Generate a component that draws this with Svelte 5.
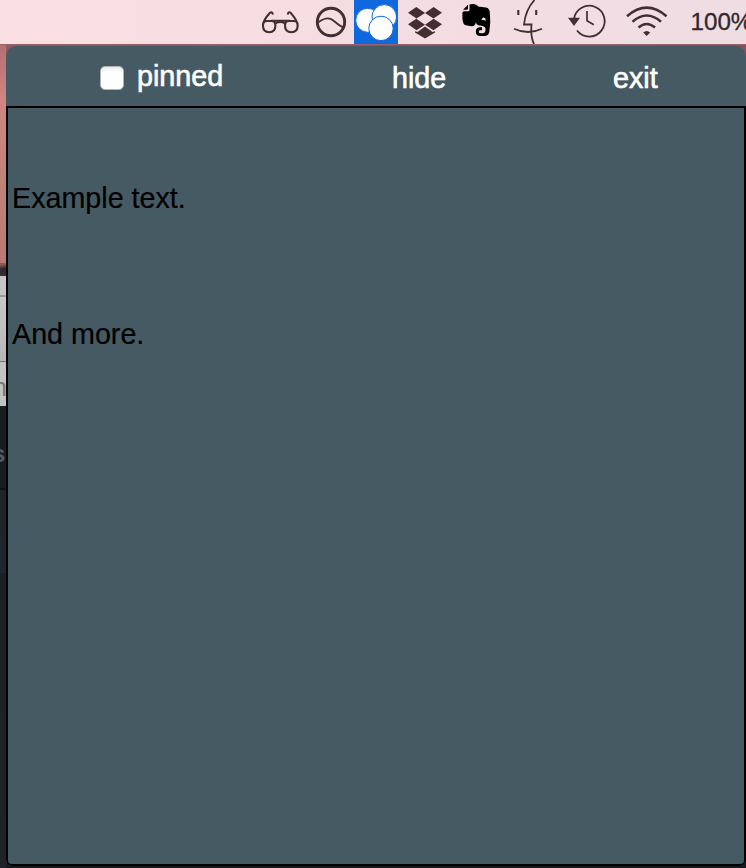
<script>
  let pinned = $state(false);
  const lines = ['Example text.', 'And more.'];
</script>

<div class="screen">
  <header class="menubar">
    <svg class="icon" width="53" viewBox="254 0 53 44" fill="none" stroke="#432e33" stroke-width="2.1">
      <path d="M263 24.5Q263.2 21 267 21H271.5Q275.4 21 275.4 25.5C275.4 30 273 32.2 269.2 32.2C265.4 32.2 263 30 263 26ZM285 25.5Q285 21 289 21H293.5Q297.6 21 297.6 24.5V26C297.6 30 295 32.2 291.4 32.2C287.4 32.2 285 30 285 25.5ZM271 20.8H290M275.4 23.4Q280.2 20.5 285 23.4M263.2 24.5C263.5 20 268 15 270 12.8Q272 11.2 273 14.5M297.5 24.5C297 20 292.5 15 290.6 12.8Q288.6 11.2 287.6 14.5" />
    </svg>
    <svg class="icon" width="47" viewBox="307 0 47 44" fill="none" stroke="#432e33">
      <circle cx="331" cy="22" r="13.7" stroke-width="2.9" />
      <path d="M318 22.5C323 18.5 329 17 333 20.2C337 23.5 340 26.5 344 27.5" stroke-width="1.8" />
    </svg>
    <svg class="icon selected" width="44" viewBox="354 0 44 44" fill="#fff" stroke="#1068df" stroke-width="1">
      <circle cx="367.7" cy="20.3" r="12" />
      <circle cx="384.3" cy="16.9" r="12.3" />
      <circle cx="381" cy="28.4" r="12.2" />
    </svg>
    <svg class="icon" width="54" viewBox="398 0 54 44" fill="#432e33">
      <path d="M408 12.7L416.3 7L425 12.9L416.5 18.6ZM425 12.9L433.6 7L442 12.7L433.5 18.6ZM408 24.3L416.3 18.8L425 24.7L416.5 30.2ZM425 24.7L433.6 18.8L442 24.3L433.5 30.2ZM415 31.3L417.5 32L425 26.6L432.5 32L435 31.3V32.6L425 38.4L415 32.6Z" />
    </svg>
    <svg class="icon" width="50" viewBox="452 0 50 44">
      <path d="M469.5 4.5Q472 3.5 475 4.2Q477.5 4.8 478 6.6L486 7.5Q489.3 8 489.8 12Q491 22 489.3 32Q488.7 36 484 36H480.5Q475.8 36 475.8 31.5Q475.8 27.4 480 27.2H482V30.3H480Q478.7 30.5 478.8 32Q479 33.2 481 33.2H483Q485.8 33 485.5 28.5Q485.2 25.7 479 25.4Q476.5 25 475.8 22.5Q475 26.3 472 26.2Q468 26 465 25Q462.8 24 462.4 18V13Q462.5 11.3 464 11.3H468Q469.5 11.3 469.5 10Z" />
      <path d="M468 4.8V8.5Q468 9.8 466.7 9.8H463Z" />
      <path d="M481.5 20.2Q481.8 17.3 484 17.5Q486 17.8 485.8 20.7Q483.5 19.7 481.5 20.2Z" fill="#f3dde2" />
    </svg>
    <svg class="icon" width="54" viewBox="502 0 54 44" fill="none" stroke="#432e33" stroke-width="1.8">
      <path d="M534.5 0C529 6 525 15 524 24.5H531.5C530.8 32 531.5 39 534 44M514 28.7Q528 35.3 542 28.7" />
      <path d="M518.3 10V15M536.2 10V15" stroke-width="2.1" />
    </svg>
    <svg class="icon" width="60" viewBox="556 0 60 44" fill="none" stroke="#432e33" stroke-width="1.8">
      <path d="M574 19A15.4 15.4 0 1 1 577 30.5" />
      <path d="M587 11V20.7L593.8 24.8" stroke-width="1.7" />
      <path d="M568 17.7H580L574 26Z" fill="#432e33" stroke="none" />
    </svg>
    <svg class="icon" width="62" viewBox="616 0 62 44" fill="none" stroke="#432e33" stroke-width="2.5">
      <path d="M627 16.2Q646.7 -1 666.5 16.2M632.5 21.8Q646.7 9.3 661 21.8M638.5 27.5Q646.7 20.4 655 27.5" />
      <path d="M643.2 32.5Q646.7 29.4 650.2 32.5L646.7 36Z" fill="#432e33" stroke="none" />
    </svg>
    <span class="battery">100%</span>
  </header>

  <div class="desktop">
    <aside class="behind">
      <div class="wallpaper"></div>
      <div class="hair"></div>
      <div class="toolbar"></div>
      <div class="paper"></div>
      <div class="tab"><span>n</span></div>
      <div class="dark"><span>s</span></div>
      <div class="rows"></div>
    </aside>
    <main class="popover">
      <nav>
        <label><input type="checkbox" bind:checked={pinned} /><span>pinned</span></label>
        <button class="hide">hide</button>
        <button class="exit">exit</button>
      </nav>
      <section>
        {#each lines as line}<p>{line}</p>{/each}
      </section>
    </main>
  </div>
</div>

<style>
  :global(body) { overflow: hidden; }
  .screen {
    width: 746px;
    height: 868px;
    overflow: hidden;
    display: flex;
    flex-direction: column;
    font-family: "Liberation Sans", Arial, sans-serif;
  }
  .menubar {
    height: 44px;
    flex: none;
    box-sizing: border-box;
    display: flex;
    padding-left: 254px;
    background: linear-gradient(90deg, #fae0e2, #f5dde2 45%, #efdde4);
  }
  .icon { height: 44px; flex: none; }
  .selected { background: #1068df; }
  .battery {
    margin-left: 12.5px;
    font-size: 24.2px;
    line-height: 43px;
    color: #33272d;
    -webkit-text-stroke: 0.3px #33272d;
  }
  .desktop {
    flex: 1;
    display: flex;
    align-items: flex-start;
    box-sizing: border-box;
    border-top: 1px solid #9a6067;
    background: linear-gradient(90deg, #925b60, #895063) 0 0 / 100% 12px no-repeat, #15191d;
  }
  .behind {
    width: 6px;
    flex: none;
    overflow: hidden;
    display: flex;
    flex-direction: column;
  }
  .behind > div { flex: none; box-sizing: border-box; }
  .wallpaper { height: 218px; background: linear-gradient(#b66e70, #d18583 25%, #bd8174 75%, #ba7875); }
  .hair { height: 13px; background: linear-gradient(170deg, #8b5a59 15%, #302329 45%, #40313a); }
  .toolbar { height: 21px; background: #c5c5c5; border-bottom: 2px solid #999; }
  .paper { height: 65px; background: linear-gradient(#c9c9c9, #b7b7b7); border-bottom: 1px solid #777; }
  .tab { height: 44px; background: #c3c3c3; color: #777; font-size: 25px; line-height: 50px; }
  .tab span { margin-left: -7px; }
  .dark { height: 84px; background: #191d22; border-bottom: 2px solid #101215; color: #555a61; font-size: 24px; font-weight: bold; line-height: 96px; }
  .dark span { margin-left: -8px; }
  .rows { height: 378px; background: linear-gradient(#202328 44px, #202630 44px 83px, #1c1f25 83px, #20222a); }
  .popover {
    flex: 1;
    height: 820px;
    margin-top: 1px;
    display: flex;
    flex-direction: column;
    overflow: hidden;
    background: #465a64;
    border-radius: 10px 10px 6px 6px;
  }
  nav {
    height: 60px;
    flex: none;
    display: flex;
    align-items: flex-start;
    color: #fff;
    font-size: 28.7px;
    line-height: 34px;
    -webkit-text-stroke: 0.6px #fff;
  }
  label { display: flex; align-items: flex-start; margin: 13px 0 0 94px; width: 290px; }
  input {
    appearance: none;
    width: 24px;
    height: 24px;
    margin: 7px 13px 0 0;
    border: 1px solid #b2b5b7;
    border-radius: 5px;
    background: linear-gradient(#e9e9e9, #fff 5px);
  }
  button {
    margin: 15px 0 0;
    padding: 0;
    border: 0;
    background: none;
    color: inherit;
    font: inherit;
    text-align: left;
    -webkit-text-stroke: inherit;
  }
  .hide { width: 221px; margin-left: 2px; }
  section {
    flex: 1;
    box-sizing: border-box;
    border: 2px solid #000;
    border-radius: 0 0 6px 6px;
    padding: 73px 4px 0;
  }
  p { margin: 0 0 102px; font-size: 28.7px; line-height: 34px; color: #000; -webkit-text-stroke: 0.2px #000; }
</style>
